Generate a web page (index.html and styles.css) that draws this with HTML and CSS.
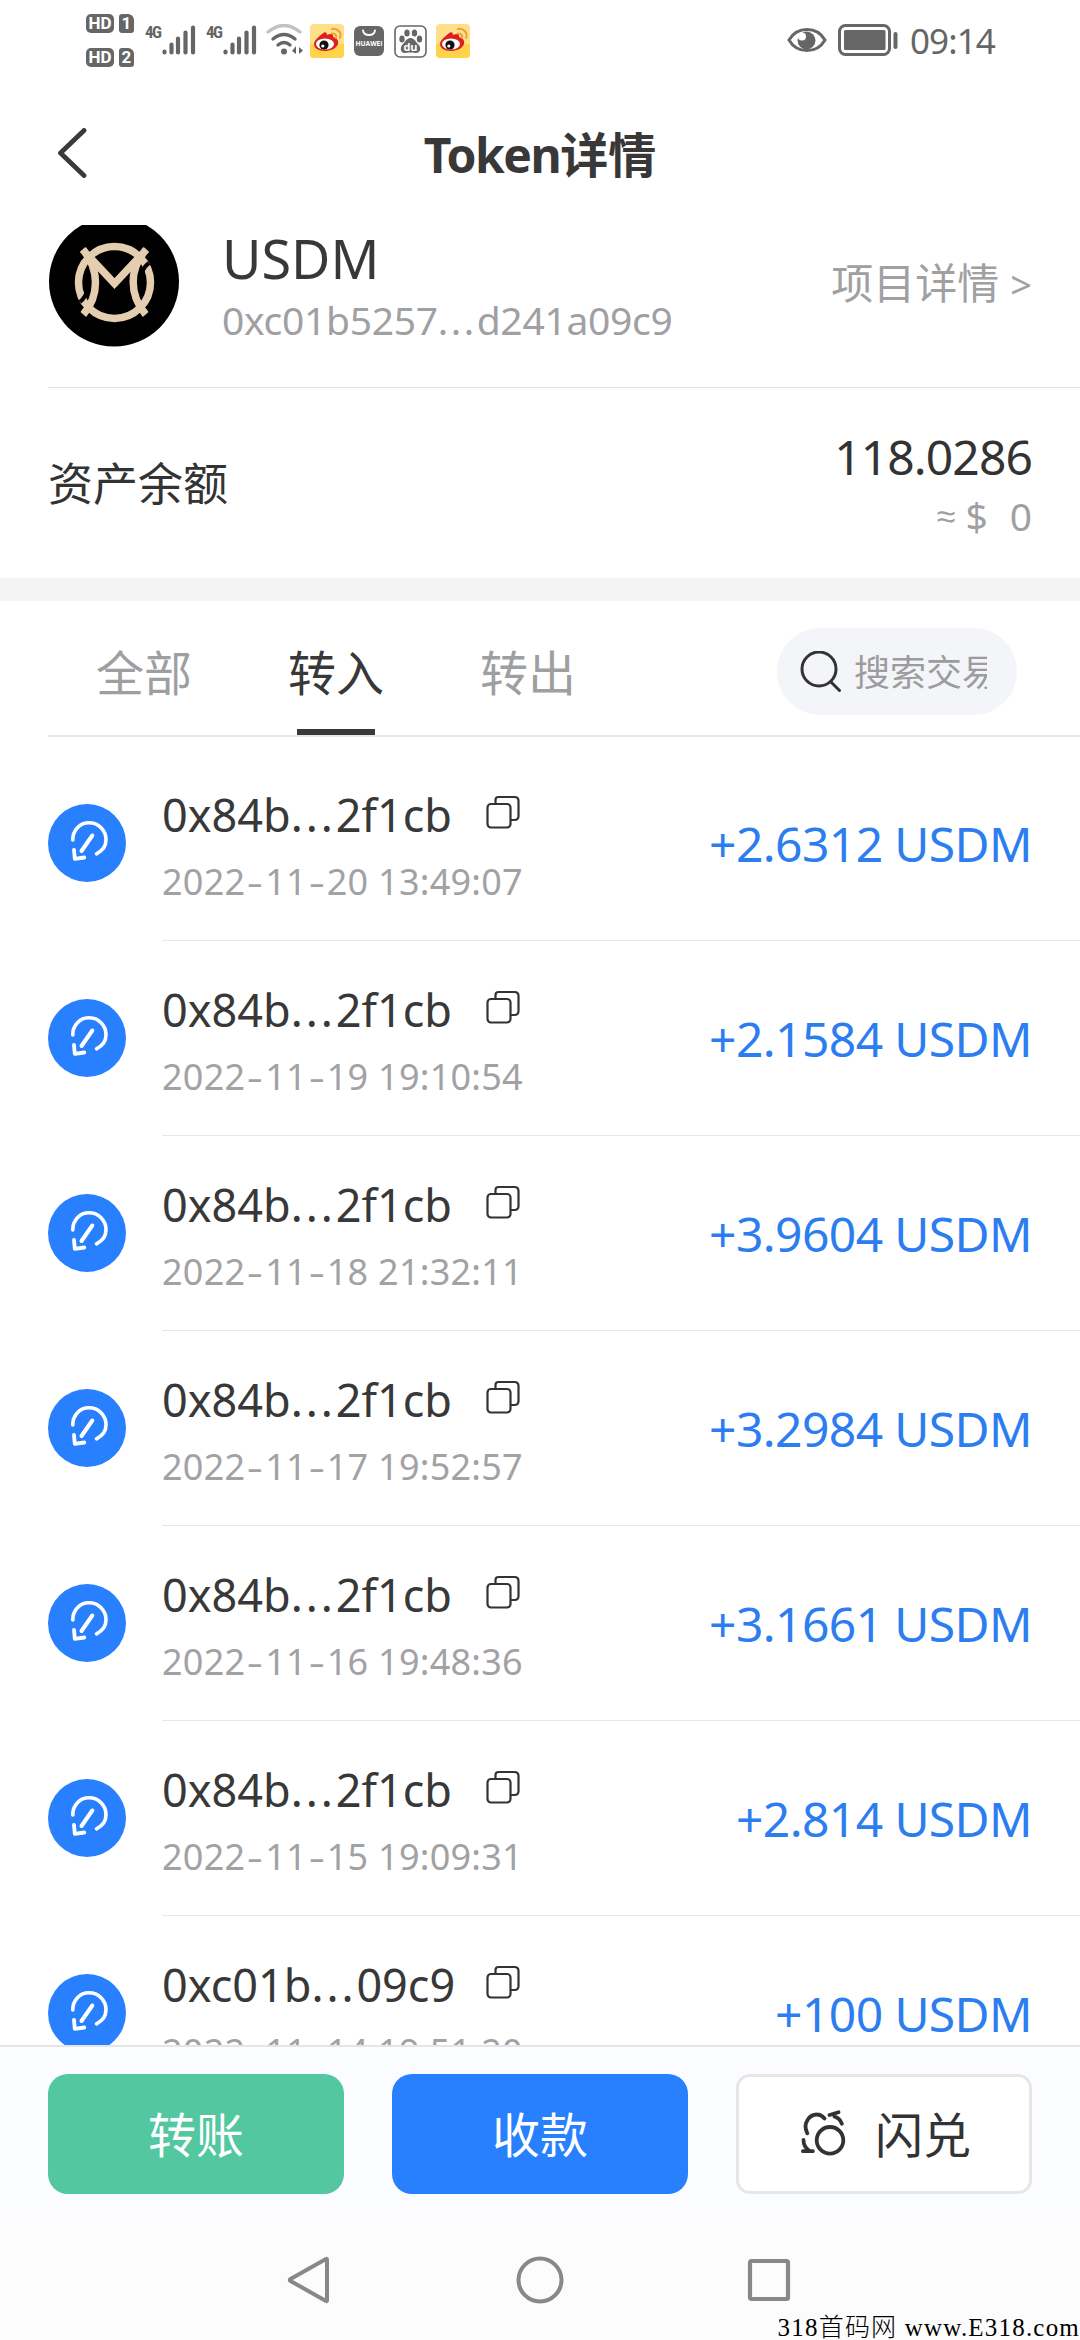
FILE: index.html
```html
<!DOCTYPE html>
<html lang="zh-CN">
<head>
<meta charset="utf-8">
<title>Token详情</title>
<link rel="stylesheet" href="styles.css">
</head>
<body>
<svg class="defs" width="0" height="0">
  <symbol id="weibo" viewBox="0 0 34 34">
    <rect width="34" height="34" rx="4" fill="#ffe08a"/>
    <path d="M0 20h34v10q0 4-4 4H4q-4 0-4-4z" fill="#ffd44a"/>
    <path d="M12 10c3-3 5-2 5 1 4-2 7-1 6 2 4 1 6 4 5 7-2 5-8 7-13 7-7 0-11-3-11-7 0-3 4-7 8-10z" fill="#dc2020"/>
    <ellipse cx="15" cy="20" rx="9" ry="5.6" fill="#fff"/>
    <circle cx="14" cy="21" r="4.6" fill="#111"/>
    <circle cx="12.8" cy="22" r="1.6" fill="#fff"/>
    <path d="M22 9.500c3-.5 5 2 4 4.500M22 5c6-1 10 4 8 9" fill="none" stroke="#e8a238" stroke-width="2" stroke-linecap="round"/>
  </symbol>
  <symbol id="bars" viewBox="0 0 34 32">
    <path d="M2.500 28.500v-1M9.500 28.500v-8M16 28.500v-14M23.500 28.500v-20M31 28.500v-25" stroke="#666" stroke-width="4.200" stroke-linecap="round"/>
  </symbol>
  <symbol id="receive" viewBox="0 0 78 78">
    <circle cx="39" cy="39" r="39" fill="#2880ff"/>
    <path d="M24.800 36C24.500 26 32 18.800 41 18.800c9.500 0 17 7.500 17 17 0 6-3.500 11-9.500 14" fill="none" stroke="#fff" stroke-width="3.600" stroke-linecap="round"/>
    <path d="M44.300 31.500 33.500 47" fill="none" stroke="#fff" stroke-width="4" stroke-linecap="round"/>
    <path d="M26 46l.8 8.800 9.500-1.300" fill="none" stroke="#fff" stroke-width="3.800" stroke-linecap="round" stroke-linejoin="round"/>
  </symbol>
  <symbol id="copy" viewBox="0 0 34 34">
    <path d="M9.500 9V5q0-3 3-3h16q4 0 4 4v15q0 4-4 4h-4" fill="none" stroke="#333" stroke-width="2.200"/>
    <rect x="1.500" y="9" width="23" height="23.500" rx="3.500" fill="none" stroke="#333" stroke-width="2.200"/>
  </symbol>
</svg>

<div class="screen">
  <header class="status">
    <div class="hd">
      <div class="hd-row"><b class="hd-tag">HD</b><b class="sim">1</b></div>
      <div class="hd-row"><b class="hd-tag">HD</b><b class="sim">2</b></div>
    </div>
    <div class="signal"><b>4G</b><svg width="34" height="32"><use href="#bars"/></svg></div>
    <div class="signal"><b>4G</b><svg width="34" height="32"><use href="#bars"/></svg></div>
    <svg class="wifi" width="38" height="32" viewBox="0 0 38 32" fill="none" stroke="#666" stroke-width="3.400" stroke-linecap="round">
      <path d="M2 8Q18 -5 34 8" stroke="#c2c2c2"/><path d="M7 15q11-9 22 0M12 21q6-5 12 0"/>
      <circle cx="18" cy="27.500" r="3" fill="#666" stroke="none"/>
      <path d="M30 22v8l-4-3zM33 23l4 3.500-4 3.500z" fill="#666" stroke="none"/>
    </svg>
    <svg class="app1" width="34" height="34"><use href="#weibo"/></svg>
    <svg class="app2" width="30" height="30" viewBox="0 0 30 30">
      <rect width="30" height="30" rx="6" fill="#666"/>
      <path d="M9 4.500c1 6 11 6 12 0" fill="none" stroke="#fff" stroke-width="1.800" stroke-linecap="round"/>
      <text x="15" y="20" class="huawei" text-anchor="middle" textLength="27" lengthAdjust="spacingAndGlyphs">HUAWEI</text>
    </svg>
    <svg class="app3" width="33" height="33" viewBox="0 0 33 33">
      <rect x="1" y="1" width="31" height="31" rx="5" fill="#fff" stroke="#666" stroke-width="1.600"/>
      <g fill="#666"><ellipse cx="8" cy="14" rx="2.700" ry="3.500"/><ellipse cx="13" cy="8" rx="2.700" ry="3.600"/><ellipse cx="20.500" cy="8" rx="2.700" ry="3.600"/><ellipse cx="25.500" cy="14" rx="2.700" ry="3.500"/>
      <path d="M16.500 13c4 0 5 4 8 6.500 3 3 2 9-3 8.500-4-.6-6-.6-10 0-5 .5-6-5-3-8.500 3-2.500 4-6.500 8-6.500z"/></g>
      <text x="16.500" y="26" class="du" text-anchor="middle">du</text>
    </svg>
    <svg class="app4" width="34" height="34"><use href="#weibo"/></svg>
    <svg class="eye" width="40" height="26" viewBox="0 0 40 26">
      <path d="M2 13C10-1 30-1 38 13 30 27 10 27 2 13z" fill="none" stroke="#666" stroke-width="3"/>
      <circle cx="19.500" cy="13.500" r="9" fill="#666"/><circle cx="15" cy="9.500" r="4" fill="#fff"/>
    </svg>
    <svg class="battery" width="61" height="32" viewBox="0 0 61 32">
      <rect x="1.500" y="1.500" width="50" height="29" rx="6" fill="none" stroke="#666" stroke-width="3"/>
      <rect x="6" y="6" width="41.500" height="20" rx="1.500" fill="#666"/><rect x="55.500" y="8" width="4" height="17" rx="2" fill="#666"/>
    </svg>
    <time class="clock">09:14</time>
  </header>

  <nav class="titlebar">
    <svg class="back" width="32" height="50" viewBox="0 0 32 50"><path d="M28 2.500 4.500 25 28 47.500" fill="none" stroke="#3a3a3a" stroke-width="4.800" stroke-linecap="round" stroke-linejoin="round"/></svg>
    <h1><span class="latin">Token</span>详情</h1>
  </nav>

  <section class="token">
    <svg class="avatar" width="131" height="122" viewBox="0 9 131 122">
      <circle cx="66" cy="65.500" r="65" fill="#000"/>
      <g fill="none" stroke="#e5cdb0" stroke-width="7.500">
        <circle cx="66.500" cy="66.500" r="36"/>
        <g stroke="#000" stroke-width="4"><path d="M32 86q6-5 8-14M101 47q-7 5-8 14"/></g>
        <path d="M35.300 34C51 53 52 79 35.300 98.500M97.700 34C81 53 81 79 97.700 98.500M34.500 33.500l32 34 32-34"/>
      </g>
    </svg>
    <div class="token-id"><div class="symbol">USDM</div><div class="contract">0xc01b5257<span class="dots">...</span>d241a09c9</div></div>
    <a class="project">项目详情 <span class="gt">&gt;</span></a>
  </section>

  <section class="balance">
    <span class="balance-label">资产余额</span>
    <div class="balance-value"><div class="amount-total">118.0286</div><div class="fiat"><span class="approx">≈</span><span>$</span><span class="zero">0</span></div></div>
  </section>

  <section class="filters">
    <div class="tab">全部</div><div class="tab active">转入</div><div class="tab">转出</div>
    <div class="search">
      <svg width="42" height="42" viewBox="0 0 42 42" fill="none" stroke="#333" stroke-width="3" stroke-linecap="round"><circle cx="19" cy="18" r="17"/><path d="m31 31 8.500 8.500"/></svg>
      <span>搜索交易</span>
    </div>
  </section>

  <main class="list">
    <article class="row"><svg class="dir"><use href="#receive"/></svg><div class="detail"><div class="who"><div class="addr"><span>0x84b<span class="dots">...</span>2f1cb</span><svg class="copy"><use href="#copy"/></svg></div><time>2022<i>-</i>11<i>-</i>20 13:49:07</time></div><div class="sum">+2.6312 USDM</div></div></article>
    <article class="row"><svg class="dir"><use href="#receive"/></svg><div class="detail"><div class="who"><div class="addr"><span>0x84b<span class="dots">...</span>2f1cb</span><svg class="copy"><use href="#copy"/></svg></div><time>2022<i>-</i>11<i>-</i>19 19:10:54</time></div><div class="sum">+2.1584 USDM</div></div></article>
    <article class="row"><svg class="dir"><use href="#receive"/></svg><div class="detail"><div class="who"><div class="addr"><span>0x84b<span class="dots">...</span>2f1cb</span><svg class="copy"><use href="#copy"/></svg></div><time>2022<i>-</i>11<i>-</i>18 21:32:11</time></div><div class="sum">+3.9604 USDM</div></div></article>
    <article class="row"><svg class="dir"><use href="#receive"/></svg><div class="detail"><div class="who"><div class="addr"><span>0x84b<span class="dots">...</span>2f1cb</span><svg class="copy"><use href="#copy"/></svg></div><time>2022<i>-</i>11<i>-</i>17 19:52:57</time></div><div class="sum">+3.2984 USDM</div></div></article>
    <article class="row"><svg class="dir"><use href="#receive"/></svg><div class="detail"><div class="who"><div class="addr"><span>0x84b<span class="dots">...</span>2f1cb</span><svg class="copy"><use href="#copy"/></svg></div><time>2022<i>-</i>11<i>-</i>16 19:48:36</time></div><div class="sum">+3.1661 USDM</div></div></article>
    <article class="row"><svg class="dir"><use href="#receive"/></svg><div class="detail"><div class="who"><div class="addr"><span>0x84b<span class="dots">...</span>2f1cb</span><svg class="copy"><use href="#copy"/></svg></div><time>2022<i>-</i>11<i>-</i>15 19:09:31</time></div><div class="sum">+2.814 USDM</div></div></article>
    <article class="row"><svg class="dir"><use href="#receive"/></svg><div class="detail"><div class="who"><div class="addr"><span>0xc01b<span class="dots">...</span>09c9</span><svg class="copy"><use href="#copy"/></svg></div><time>2022<i>-</i>11<i>-</i>14 19:51:20</time></div><div class="sum">+100 USDM</div></div></article>
  </main>

  <footer class="actions">
    <button class="btn send">转账</button>
    <button class="btn receive">收款</button>
    <button class="btn swap">
      <svg width="46" height="48" viewBox="0 0 46 48" fill="none" stroke="#333" stroke-width="3.800" stroke-linecap="round" stroke-linejoin="round">
        <circle cx="29" cy="30.300" r="13.300"/><path d="M6.300 23.300C1 13 9 4.300 16 4.500c3 0 5.500 1.500 7.500 4M28.500 5l9-2.700M33.500 6.500c4 1.300 6 3.500 7.300 7.200M2.500 30c0 5 2 8 5.500 10.500M1.900 41.200h10"/>
      </svg>
      闪兑
    </button>
  </footer>

  <nav class="sysnav">
    <svg width="44" height="48" viewBox="0 0 44 48"><path d="M40 3.500v41q0 1-1 .4L3.500 25q-1.500-1 0-2L39 3.100q1-.6 1 .4z" fill="none" stroke="#888" stroke-width="4" stroke-linejoin="round"/></svg>
    <svg width="48" height="48" viewBox="0 0 48 48"><circle cx="24" cy="24" r="21.500" fill="none" stroke="#888" stroke-width="4"/></svg>
    <svg width="44" height="44" viewBox="0 0 44 44"><rect x="3" y="3" width="38" height="38" rx="1.500" fill="none" stroke="#888" stroke-width="4.200"/></svg>
    <div class="watermark">318<span>首码网</span> www.E318.com</div>
  </nav>
</div>
</body>
</html>
```
FILE: styles.css
```css
* { box-sizing: border-box; }
body {
  margin: 0;
  background: #fff;
  color: #383838;
  font-family: "Noto Sans", "Noto Sans CJK SC", sans-serif;
}
svg { display: block; flex: none; }
.defs { position: absolute; }
.screen {
  width: 1080px;
  height: 2340px;
  overflow: hidden;
  display: flex;
  flex-direction: column;
}

/* Status bar */
.status {
  height: 90px;
  padding: 14px 0 0 86px;
  display: flex;
  align-items: flex-start;
  color: #666;
}
.hd { display: flex; flex-direction: column; gap: 15px; width: 59px; }
.hd-row { display: flex; gap: 5px; }
.hd-tag, .sim {
  height: 19px;
  border-radius: 5px;
  background: #666;
  color: #fff;
  font: 700 17px/19px Roboto, sans-serif;
  text-align: center;
}
.hd-tag { width: 28px; }
.sim { width: 15px; border-radius: 3px 6px 3px 3px; }
.signal { display: flex; width: 61px; padding-top: 10px; }
.signal b { width: 17px; font: 700 17px/17px "Roboto Condensed", Roboto, sans-serif; letter-spacing: -1.5px; }
.wifi { margin: 10px 0 0 -1px; }
.app1 { margin: 10px 0 0 6px; }
.app2 { margin: 12px 0 0 10px; }
.app3 { margin: 11px 0 0 10px; }
.app4 { margin: 10px 0 0 9px; }
.huawei { font: 700 7px "Open Sans", sans-serif; fill: #fff; }
.du { font: 700 11px "Open Sans", sans-serif; fill: #fff; }
.eye { margin: 13px 0 0 317px; }
.battery { margin: 10px 0 0 11px; }
.clock { margin: 4px 0 0 11px; font-size: 35px; line-height: 46px; letter-spacing: -0.9px; }

/* Title bar */
.titlebar {
  height: 135px;
  padding: 0 56px 6px;
  display: grid;
  grid-template-columns: 32px 1fr 32px;
  align-items: center;
}
.back { margin-bottom: 3px; }
.titlebar h1 { margin: 0; text-align: center; font-size: 48px; line-height: 60px; font-weight: 700; }
.latin { letter-spacing: -1.5px; }

/* Token summary */
.token {
  height: 163px;
  margin-left: 48px;
  padding-right: 48px;
  border-bottom: 1px solid #e4e4e4;
  display: flex;
}
.token-id { padding: 0 0 0 43px; flex: 1; }
.symbol { font-size: 54px; line-height: 60px; padding-top: 3px; }
.contract { font-size: 39px; line-height: 48px; padding-top: 8px; letter-spacing: -0.3px; color: #a0a0a3; }
.dots { letter-spacing: 0.065em; }
.project { padding-top: 28px; font-size: 42px; line-height: 60px; color: #a0a0a3; }
.gt { font-size: 38px; }

/* Balance */
.balance {
  height: 213px;
  padding: 0 48px;
  border-bottom: 23px solid #f4f4f4;
  display: flex;
  justify-content: space-between;
  align-items: center;
  color: #333;
}
.balance-label { font-size: 45px; line-height: 60px; padding-top: 2px; }
.balance-value { text-align: right; padding-top: 6px; }
.amount-total { font-size: 48px; line-height: 60px; letter-spacing: -0.9px; }
.fiat { display: flex; justify-content: flex-end; font-size: 39px; line-height: 58px; color: #a0a0a3; }
.approx { font-size: 34px; font-family: "Liberation Sans", sans-serif; margin-right: 10px; }
.zero { margin-left: 22px; }

/* Filter tabs */
.filters {
  height: 136px;
  margin-left: 48px;
  border-bottom: 2px solid #e6e6e6;
  display: flex;
  align-items: stretch;
}
.tab {
  width: 192px;
  padding-top: 38px;
  font-size: 48px;
  line-height: 68px;
  text-align: center;
  color: #9f9fa2;
}
.tab.active {
  color: #383838;
  background: linear-gradient(#383838, #383838) center bottom / 78px 6px no-repeat;
}
.search {
  width: 240px;
  height: 87px;
  margin: 27px 0 0 153px;
  padding: 0 30px 0 23px;
  border-radius: 44px;
  background: #f4f5f8;
  display: flex;
  align-items: center;
  gap: 12px;
}
.search span { flex: 1; font-size: 36px; line-height: 50px; padding-top: 2px; white-space: nowrap; overflow: hidden; color: #9c9c9f; }

/* Transfers */
.list { height: 1308px; padding-top: 9px; overflow: hidden; }
.row { height: 195px; padding-left: 48px; display: flex; align-items: center; }
.dir { width: 78px; height: 78px; margin-bottom: 2px; }
.detail {
  flex: 1;
  height: 195px;
  margin-left: 36px;
  padding-right: 48px;
  border-bottom: 1px solid #e6e6e6;
  display: flex;
  justify-content: space-between;
}
.who { padding-top: 37px; }
.addr { display: flex; font-size: 45px; line-height: 64px; white-space: nowrap; }
.addr > span { width: 324px; }
.copy { width: 34px; height: 34px; margin-top: 12px; }
.who time { display: block; font-size: 36px; line-height: 50px; margin-top: 10px; letter-spacing: 0.25px; color: #a2a2a4; }
.who i { font-style: normal; display: inline-block; transform: scaleX(1.4); margin: 0 4px; }
.sum { font-size: 48px; line-height: 66px; padding-top: 65px; letter-spacing: -0.6px; color: #2c7df0; }

/* Bottom actions */
.actions {
  height: 175px;
  padding: 27px 48px 0;
  border-top: 2px solid #e4e5e8;
  background: #fbfcff;
  display: grid;
  grid-template-columns: repeat(3, 1fr);
  gap: 48px;
}
.btn {
  height: 120px;
  padding: 2px 0 0;
  border: 0;
  border-radius: 20px;
  font: 48px/66px "Noto Sans", "Noto Sans CJK SC", sans-serif;
  color: #fff;
  display: flex;
  align-items: center;
  justify-content: center;
}
.send { background: #52c7a0; }
.receive { background: #2880ff; }
.swap { background: #fff; color: #333; border: 3px solid #e6e6e6; border-radius: 14px; gap: 28px; padding-left: 4px; }
.swap svg { margin-bottom: 2px; }

/* System navigation */
.sysnav {
  flex: 1;
  padding-top: 36px;
  background: #fcfcfc;
  display: flex;
  align-items: flex-start;
  position: relative;
  padding-left: 287px;
  gap: 185px;
}
.sysnav svg:nth-child(3) { margin: 2px 0 0 -2px; }
.watermark {
  position: absolute;
  right: 0;
  bottom: -3px;
  font: 25px/30px "Liberation Serif", "Noto Sans CJK SC", serif;
  letter-spacing: 1.2px;
  color: #000;
  white-space: pre;
}
.watermark span { font-weight: 300; }
```
